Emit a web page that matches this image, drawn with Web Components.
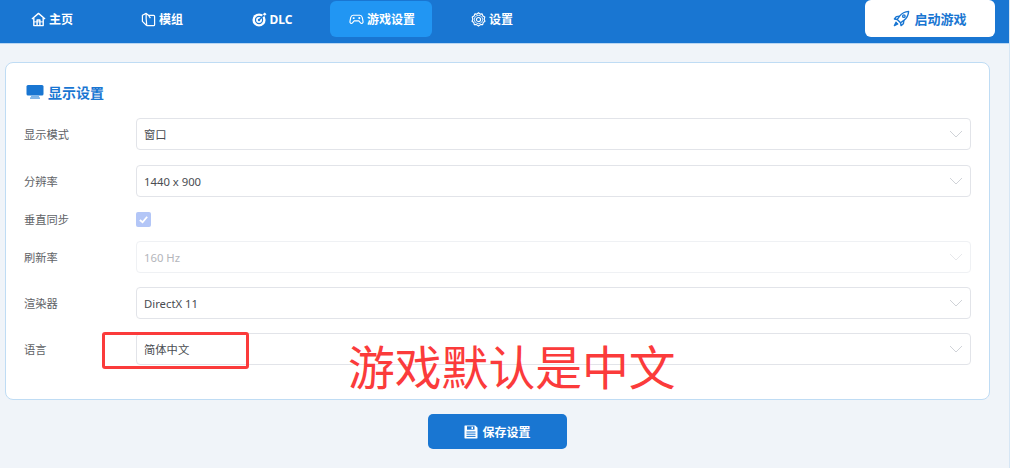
<!DOCTYPE html>
<html lang="zh">
<head>
<meta charset="utf-8">
<title>游戏设置</title>
<style>
    html, body { margin: 0; padding: 0; height: 100%; background: #fff; overflow: hidden; }
    body { font-family: "Noto Sans", "Noto Sans CJK SC", sans-serif; }
</style>
</head>
<body>
<launcher-app>
    <top-bar slot="bar">
        <nav-item>
            <svg slot="icon" viewBox="0 0 16 16" fill="none" stroke="currentColor" stroke-width="1.5" stroke-linejoin="round"><path d="M1 7.500 8 1.500l7 6"/><path d="M3 6.500v8h10v-8"/><path d="M3 10.500h10" stroke-width="1"/><path d="M6.500 14.500v-6h3v6"/></svg>
            主页
        </nav-item>
        <nav-item>
            <svg slot="icon" viewBox="0 0 16 16" fill="none" stroke="currentColor" stroke-width="1.300" stroke-linejoin="round"><path d="M1.500 3.500 5.500 1.500 8 3.500h5.500a1 1 0 0 1 1 1V13.500a1 1 0 0 1-1 1H6.500a1 1 0 0 1-.8-.4L1.500 10z"/><path d="M5.500 1.500V7l.6 7"/><path d="M8 3.500 10 6.500"/></svg>
            模组
        </nav-item>
        <nav-item>
            <svg slot="icon" viewBox="0 0 16 16" fill="none"><circle cx="7.500" cy="8.500" r="7" fill="currentColor"/><circle cx="7.500" cy="8.500" r="3.800" stroke="#1976d2" stroke-width="1.300"/><circle cx="7.500" cy="8.500" r="1.300" fill="#1976d2"/><path d="M8 8 14 2" stroke="#1976d2" stroke-width="1.600"/><path d="M11.500 2.500 13.500.5l2 2-2 1.500" fill="currentColor"/></svg>
            DLC
        </nav-item>
        <nav-item active>
            <svg slot="icon" viewBox="0 0 16 16" fill="none" stroke="currentColor" stroke-width="1.200" stroke-linejoin="round"><path d="M4.500 3.500h7c1.600 0 2.300 1 2.700 2.600l.8 4.200c.3 1.600-1.600 2.600-2.700 1.300L10.500 9.500h-5L3.700 11.600C2.600 12.900.7 11.900 1 10.300l.8-4.200C2.200 4.500 2.900 3.500 4.500 3.500z"/><path d="M5 5.500v2M4 6.500h2"/><circle cx="11" cy="6.500" r=".5"/></svg>
            游戏设置
        </nav-item>
        <nav-item>
            <svg slot="icon" viewBox="0 0 16 16" fill="none" stroke="currentColor" stroke-width="1.200"><circle cx="8" cy="8" r="2.200"/><circle cx="8" cy="8" r="4.400" stroke-width=".9"/><path d="M8 .8 9.700 2.300 11.900 2 12.700 4.200 14.700 5.400 14 7.700 14.900 9.900 13 11.200 12.500 13.500 10.200 13.500 8 15 5.800 13.500 3.500 13.500 3 11.200 1.100 9.900 2 7.700 1.300 5.400 3.300 4.200 4.100 2 6.300 2.300z" stroke-linejoin="round"/></svg>
            设置
        </nav-item>
        <start-button slot="action">
            <svg slot="icon" viewBox="0 0 18 18" fill="none" stroke="currentColor" stroke-width="1.500" stroke-linejoin="round"><path d="M16.500 1.500c-4 .2-7 1.800-9.500 5L4.500 10l3.500 3.500 3.500-2.500c3.200-2.500 4.800-5.500 5-9.500z"/><path d="M7 6.500 3.500 7 1.500 9.500 4.500 10M11.500 11l-.5 3.500-2.500 2L8 13.500"/><circle cx="11.500" cy="6.500" r="1.300"/><path d="M3.500 12.500 1.500 16.500l4-2" fill="currentColor"/></svg>
            启动游戏
        </start-button>
    </top-bar>

    <settings-card heading="显示设置">
        <svg slot="icon" viewBox="0 0 18 16"><rect x="0.500" y="1" width="17" height="10.500" rx="1.500" fill="#1976d2"/><rect x="5" y="11.500" width="8" height="2" fill="#7db4e8"/><rect x="4" y="13.500" width="10" height="1.200" fill="#4d97df"/></svg>
        <form-row label="显示模式" style="margin-bottom:1px"><select-box>窗口</select-box></form-row>
        <form-row label="分辨率"><select-box>1440 x 900</select-box></form-row>
        <form-row label="垂直同步" slim><check-box></check-box></form-row>
        <form-row label="刷新率"><select-box disabled>160 Hz</select-box></form-row>
        <form-row label="渲染器"><select-box>DirectX 11</select-box></form-row>
        <form-row label="语言"><select-box>简体中文</select-box></form-row>
    </settings-card>

    <save-button slot="footer">
        <svg slot="icon" viewBox="0 0 14 14"><path d="M.5 1C.5.700.7.500 1 .500h10.300L13.500 2.700V13c0 .3-.2.500-.5.500H1c-.3 0-.5-.2-.5-.5z" fill="currentColor"/><rect x="3" y="1.300" width="7.500" height="3.400" fill="#1976d2"/><rect x="7.500" y="1.800" width="1.500" height="2.300" fill="currentColor"/><path d="M2.500 7h9M2.500 9.200h9M2.500 11.400h9" stroke="#1976d2" stroke-width="1"/></svg>
        保存设置
    </save-button>

    <red-note slot="overlay" style="left:102px;top:332px;width:147px;height:37px"></red-note>
    <red-note slot="overlay" text style="left:348px;top:333px">游戏默认是中文</red-note>
</launcher-app>

<script>
const FONT = `"Noto Sans", "Noto Sans CJK SC", sans-serif`;

class LauncherApp extends HTMLElement {
    connectedCallback() {
        this.attachShadow({ mode: 'open' });
        this.shadowRoot.innerHTML = `
            <style>
                :host {
                    display: flex;
                    flex-direction: column;
                    position: relative;
                    box-sizing: border-box;
                    width: 1010px;
                    height: 468px;
                    background: #f0f4f9;
                    border-right: 1px solid #d6e6f5;
                    font-family: ${FONT};
                }
                main { display: flex; flex-direction: column; padding: 18px 19px 0 5px; }
                footer { display: flex; justify-content: center; padding: 14px 19px 0 5px; }
            </style>
            <slot name="bar"></slot>
            <main><slot></slot></main>
            <footer><slot name="footer"></slot></footer>
            <slot name="overlay"></slot>
        `;
    }
}

class TopBar extends HTMLElement {
    connectedCallback() {
        this.attachShadow({ mode: 'open' });
        this.shadowRoot.innerHTML = `
            <style>
                :host {
                    display: flex;
                    align-items: flex-start;
                    justify-content: space-between;
                    box-sizing: border-box;
                    height: 44px;
                    padding: 1px 14px 0 0;
                    background: #1976d2;
                    border-bottom: 1px solid #b9d6f2;
                }
                nav { display: flex; gap: 8px; }
            </style>
            <nav><slot></slot></nav>
            <slot name="action"></slot>
        `;
    }
}

class NavItem extends HTMLElement {
    connectedCallback() {
        this.attachShadow({ mode: 'open' });
        this.shadowRoot.innerHTML = `
            <style>
                :host {
                    display: flex;
                    align-items: center;
                    justify-content: center;
                    gap: 3px;
                    box-sizing: border-box;
                    width: 102px;
                    height: 36px;
                    padding-left: 2px;
                    border-radius: 6px;
                    color: #fff;
                    font-size: 12px;
                    font-weight: 700;
                }
                :host([active]) { background: #2196f3; }
                ::slotted(svg) { width: 15px; height: 15px; flex: none; }
            </style>
            <slot name="icon"></slot><span><slot></slot></span>
        `;
    }
}

class StartButton extends HTMLElement {
    connectedCallback() {
        this.attachShadow({ mode: 'open' });
        this.shadowRoot.innerHTML = `
            <style>
                :host {
                    display: flex;
                    align-items: center;
                    justify-content: center;
                    gap: 4px;
                    width: 130px;
                    height: 37px;
                    margin-top: -1px;
                    background: #fff;
                    border-radius: 6px;
                    color: #1976d2;
                    font-size: 13px;
                    font-weight: 700;
                }
                ::slotted(svg) { width: 17px; height: 17px; flex: none; }
            </style>
            <slot name="icon"></slot><span><slot></slot></span>
        `;
    }
}

class SettingsCard extends HTMLElement {
    connectedCallback() {
        this.attachShadow({ mode: 'open' });
        this.shadowRoot.innerHTML = `
            <style>
                :host {
                    display: block;
                    box-sizing: border-box;
                    height: 338px;
                    padding: 19px 18px 0 18px;
                    background: #fff;
                    border: 1px solid #bfdcf4;
                    border-radius: 8px;
                }
                h2 {
                    display: flex;
                    align-items: center;
                    gap: 4px;
                    height: 20px;
                    margin: 0 0 16px 2px;
                    color: #1976d2;
                    font-size: 14px;
                    font-weight: 700;
                }
                ::slotted(svg) { width: 18px; height: 16px; flex: none; }
                .rows { display: flex; flex-direction: column; gap: 14px; }
            </style>
            <h2><slot name="icon"></slot>${this.getAttribute('heading')}</h2>
            <div class="rows"><slot></slot></div>
        `;
    }
}

class FormRow extends HTMLElement {
    connectedCallback() {
        this.attachShadow({ mode: 'open' });
        this.shadowRoot.innerHTML = `
            <style>
                :host { display: flex; align-items: center; color: #606266; font-size: 11.250px; }
                label { flex: none; width: 112px; }
                div { flex: 1; display: flex; }
            </style>
            <label>${this.getAttribute('label')}</label>
            <div><slot></slot></div>
        `;
    }
}

class SelectBox extends HTMLElement {
    connectedCallback() {
        this.attachShadow({ mode: 'open' });
        this.shadowRoot.innerHTML = `
            <style>
                :host {
                    flex: 1;
                    display: flex;
                    align-items: center;
                    justify-content: space-between;
                    box-sizing: border-box;
                    height: 32px;
                    padding: 0 7px 0 7px;
                    background: #fff;
                    border: 1px solid #e2e4e9;
                    border-radius: 4px;
                    color: #4a4d52;
                    font-size: 11.300px;
                }
                :host([disabled]) { color: #b4b6bb; border-color: #eff1f4; }
                :host([disabled]) svg { opacity: .5; }
                svg { width: 14px; height: 8px; fill: none; stroke: #d0d3d8; stroke-width: 1; }
            </style>
            <span><slot></slot></span>
            <svg viewBox="0 0 14 8"><path d="M1 1l6 6 6-6"/></svg>
        `;
    }
}

class CheckBox extends HTMLElement {
    connectedCallback() {
        this.attachShadow({ mode: 'open' });
        this.shadowRoot.innerHTML = `
            <style>
                :host {
                    display: flex;
                    align-items: center;
                    justify-content: center;
                    width: 15px;
                    height: 15px;
                    background: #b3c6f7;
                    border-radius: 2px;
                }
                svg { width: 11px; height: 11px; fill: none; stroke: #fff; stroke-width: 2; }
            </style>
            <svg viewBox="0 0 12 12"><path d="M2 6.500 5 9l5-6"/></svg>
        `;
    }
}

class SaveButton extends HTMLElement {
    connectedCallback() {
        this.attachShadow({ mode: 'open' });
        this.shadowRoot.innerHTML = `
            <style>
                :host {
                    display: flex;
                    align-items: center;
                    justify-content: center;
                    gap: 4px;
                    width: 139px;
                    height: 35px;
                    background: #1976d2;
                    border-radius: 5px;
                    color: #fff;
                    font-size: 12px;
                    font-weight: 700;
                }
                ::slotted(svg) { width: 14px; height: 14px; flex: none; }
            </style>
            <slot name="icon"></slot><span><slot></slot></span>
        `;
    }
}

// красные пометки поверх скриншота
class RedNote extends HTMLElement {
    connectedCallback() {
        this.attachShadow({ mode: 'open' });
        this.shadowRoot.innerHTML = `
            <style>
                :host { position: absolute; box-sizing: border-box; color: #fb3b3b; }
                :host(:not([text])) { border: 3px solid #fb3b3b; border-radius: 3px; }
                :host([text]) { font-family: "Noto Sans CJK SC", sans-serif; font-size: 46.800px; line-height: 64px; white-space: nowrap; }
            </style>
            <slot></slot>
        `;
    }
}

customElements.define('launcher-app', LauncherApp);
customElements.define('top-bar', TopBar);
customElements.define('nav-item', NavItem);
customElements.define('start-button', StartButton);
customElements.define('settings-card', SettingsCard);
customElements.define('form-row', FormRow);
customElements.define('select-box', SelectBox);
customElements.define('check-box', CheckBox);
customElements.define('save-button', SaveButton);
customElements.define('red-note', RedNote);
</script>
</body>
</html>
